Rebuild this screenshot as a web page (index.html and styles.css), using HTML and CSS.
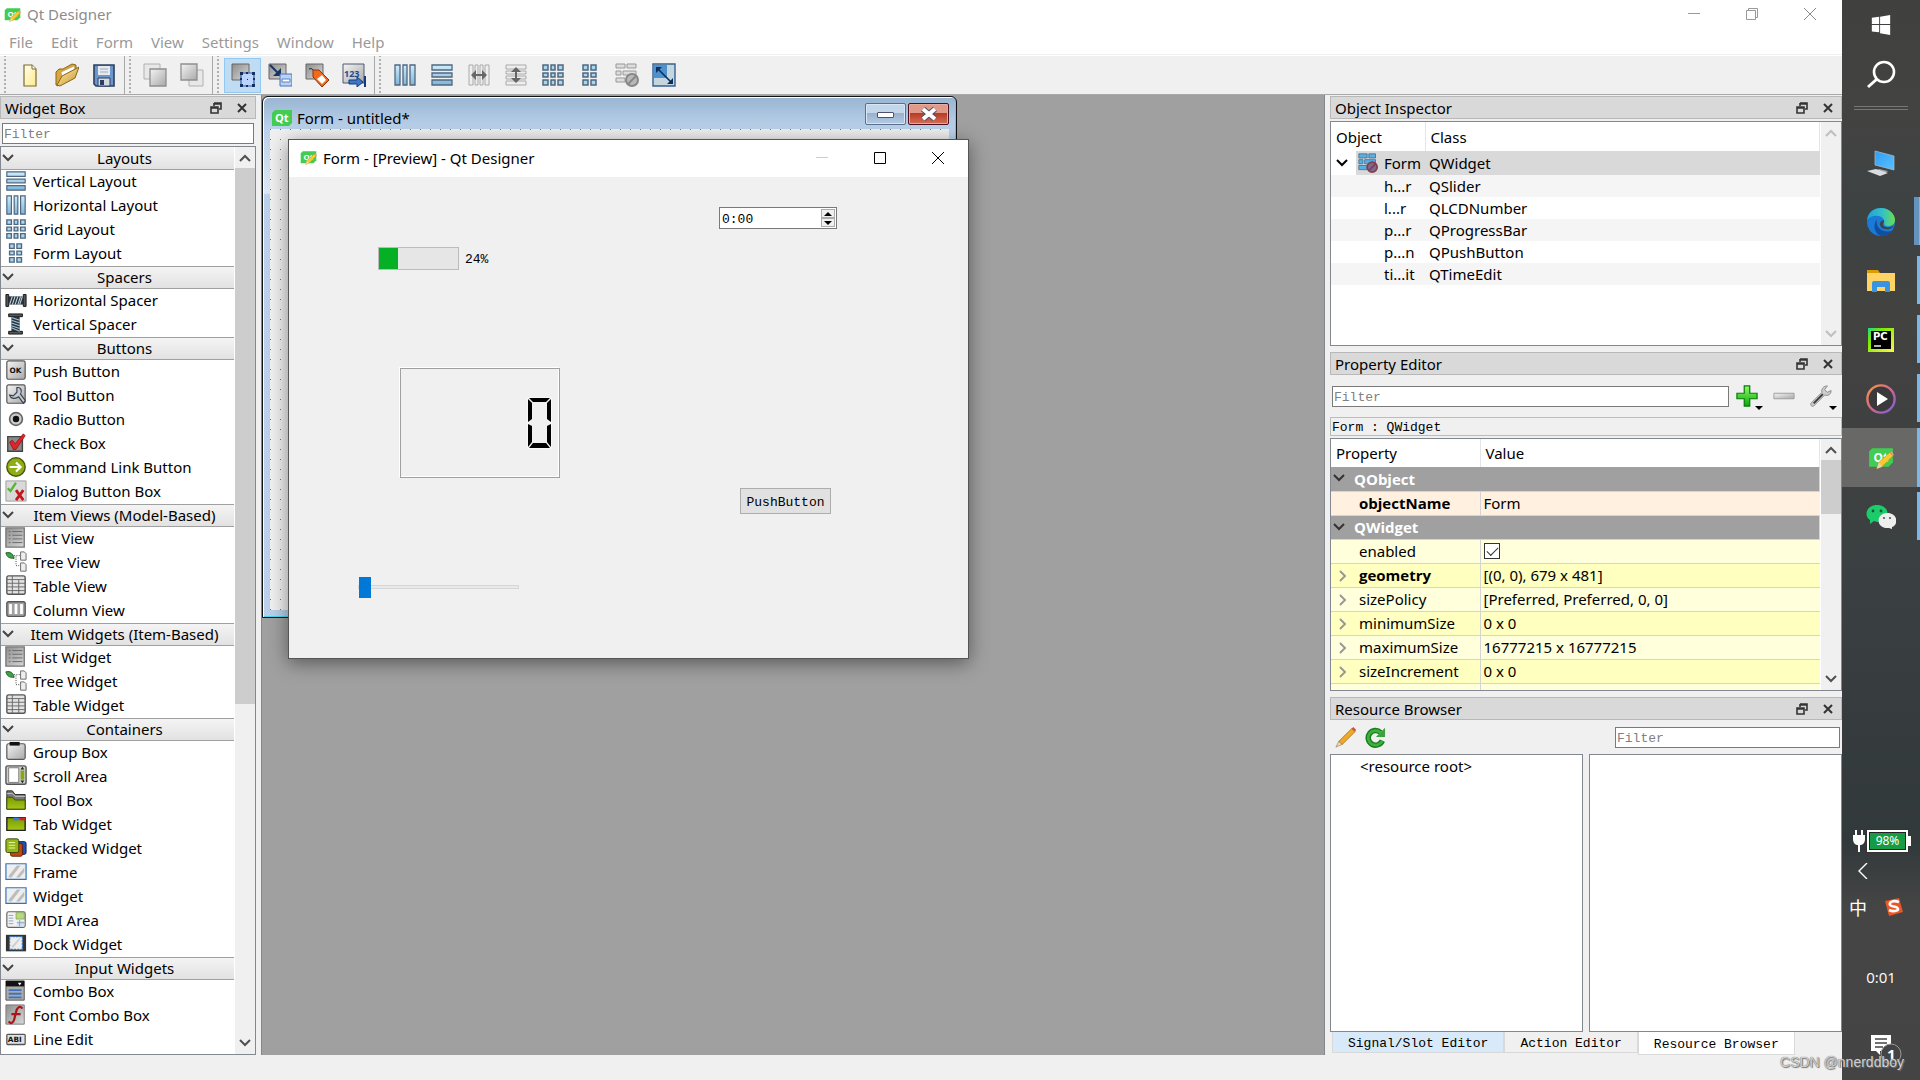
FILE: index.html
```html
<!DOCTYPE html>
<html lang="en">
<head>
    <meta charset="UTF-8">
    <meta name="viewport" content="width=device-width, initial-scale=1.0">
    <title>Qt Designer</title>
    <link rel="stylesheet" href="styles.css">
</head>
<body>

    <!-- Gradients shared by the icons -->
    <svg class="gradients" aria-hidden="true">
        <defs>
            <linearGradient id="blue" x1="0" y1="0" x2="0" y2="1"><stop offset="0" stop-color="#cdeefc"/><stop offset="1" stop-color="#7fb4d8"/></linearGradient>
            <linearGradient id="grey" x1="0" y1="0" x2="1" y2="1"><stop offset="0" stop-color="#f4f4f4"/><stop offset="1" stop-color="#a8a8a8"/></linearGradient>
            <linearGradient id="dark" x1="0" y1="0" x2="1" y2="1"><stop offset="0" stop-color="#8e8e8e"/><stop offset="1" stop-color="#d8d8d8"/></linearGradient>
            <linearGradient id="paper" x1="0" y1="0" x2="1" y2="1"><stop offset="0" stop-color="#fffff0"/><stop offset="1" stop-color="#ffe98a"/></linearGradient>
            <linearGradient id="gold" x1="0" y1="0" x2="1" y2="1"><stop offset="0" stop-color="#fff2b0"/><stop offset="1" stop-color="#c8912a"/></linearGradient>
            <linearGradient id="lime" x1="0" y1="0" x2="0" y2="1"><stop offset="0" stop-color="#7d9b00"/><stop offset="1" stop-color="#a3c61a"/></linearGradient>
            <linearGradient id="green" x1="0" y1="0" x2="0" y2="1"><stop offset="0" stop-color="#8dfa6a"/><stop offset="1" stop-color="#0aa80a"/></linearGradient>
            <linearGradient id="edge1" x1="0" y1="0" x2="1" y2="0"><stop offset="0" stop-color="#1fa2dc"/><stop offset=".6" stop-color="#36c3c0"/><stop offset="1" stop-color="#6be04a"/></linearGradient>
            <linearGradient id="ring" x1="0" y1="0" x2="1" y2="1"><stop offset="0" stop-color="#ff9440"/><stop offset=".5" stop-color="#d0688c"/><stop offset="1" stop-color="#7a5ce0"/></linearGradient>
            <linearGradient id="pyc" x1="0" y1="0" x2="1" y2="1"><stop offset="0" stop-color="#21d789"/><stop offset=".3" stop-color="#7be800"/><stop offset="1" stop-color="#fcf84a"/></linearGradient>
            <linearGradient id="screen" x1="0" y1="0" x2="1" y2="1"><stop offset="0" stop-color="#2f9df4"/><stop offset="1" stop-color="#5cc0ff"/></linearGradient>
        </defs>
    </svg>

    <!-- Icons -->
    <svg class="sprite" aria-hidden="true">
        <symbol id="qt-pencil" viewBox="0 0 24 20">
            <path d="M4 1h19v13l-4 4H1V4z" fill="#41cd52"/>
            <text x="5" y="14" class="qt-text">Qt</text>
            <path d="M10 14 20 5l3 3-10 10-5 2z" fill="#f9c92e" stroke="#b98a1a" stroke-width=".5"/>
            <path d="m20 5 2-1 2 3-1 1z" fill="#e59a86"/>
            <path d="m10 14-2 6 5-2z" fill="#e9d3ae"/>
        </symbol>
        <symbol id="qt" viewBox="0 0 20 16">
            <path d="M3 0h17v13l-3 3H0V3z" fill="#41cd52"/>
            <text x="3" y="12" class="qt-text">Qt</text>
        </symbol>
        <symbol id="float" viewBox="0 0 12 12">
            <path d="M4 1h7v6H9M4 1v3M4 2h7" fill="none" stroke="#333" stroke-width="1.6"/>
            <path d="M1 5h7v6H1zM1 6h7" fill="none" stroke="#333" stroke-width="1.6"/>
        </symbol>
        <symbol id="x" viewBox="0 0 12 12"><path d="m2 2 8 8M10 2l-8 8" stroke="#333" stroke-width="2" fill="none"/></symbol>
        <symbol id="thin-x" viewBox="0 0 12 12"><path d="m0 0 12 12M12 0 0 12" stroke="currentColor" fill="none"/></symbol>
        <symbol id="down" viewBox="0 0 12 12"><path d="m1 3 5 5 5-5" stroke="currentColor" stroke-width="2" fill="none"/></symbol>
        <symbol id="up" viewBox="0 0 12 12"><path d="m1 9 5-5 5 5" stroke="currentColor" stroke-width="2" fill="none"/></symbol>
        <symbol id="right" viewBox="0 0 12 12"><path d="m4 1 5 5-5 5" stroke="currentColor" stroke-width="2" fill="none"/></symbol>

        <!-- toolbar -->
        <symbol id="new" viewBox="0 0 24 24"><path d="M6 2h8l4 4v17H6z" fill="url(#paper)" stroke="#7d6a2c" stroke-width="1.2"/><path d="M14 2v4h4" fill="#fff" stroke="#7d6a2c"/></symbol>
        <symbol id="open" viewBox="0 0 24 24"><path d="M1 22V9l3-3h4l9-5 4 1v6L8 18 3 23z" fill="#d9a63a" stroke="#8a6418"/><path d="m6 9 13-6 1 3L7 15z" fill="#fff" stroke="#b79a50" stroke-width=".7"/><path d="M2 22 7 13 24 4l-4 11L5 23z" fill="url(#gold)" stroke="#8a6418"/></symbol>
        <symbol id="save" viewBox="0 0 24 24"><path d="M2 2h20v21H4l-2-2z" fill="#6c97cc" stroke="#2b3f60" stroke-width="1.6"/><path d="M6 3h12v9H6z" fill="#e6eaf0"/><path d="M8 6h8M8 9h8" stroke="#a2abb8"/><path d="M6 15h12v8H6z" fill="#d4d9e0" stroke="#2b3f60"/><path d="M8 17h4v5H8z" fill="#2b3f60"/></symbol>
        <symbol id="back" viewBox="0 0 24 24"><path d="M1 1h16v15H1z" fill="#e8e8e8" stroke="#b0b0b0"/><path d="M7 6h16v17H7z" fill="url(#grey)" stroke="#8f8f8f" stroke-width="1.3"/></symbol>
        <symbol id="front" viewBox="0 0 24 24"><path d="M9 7h14v16H9z" fill="#e8e8e8" stroke="#b0b0b0"/><path d="M1 1h16v16H1z" fill="url(#grey)" stroke="#8f8f8f" stroke-width="1.3"/></symbol>
        <symbol id="edit-widgets" viewBox="0 0 24 24"><path d="M1 1h17v16H1z" fill="url(#dark)" stroke="#666"/><path d="M10 10h13v13H10z" fill="#bcd4ff" stroke="#2d5db0" stroke-width="1.2"/><path d="M9 9h3v3H9zM15 9h2v2h-2zM21 9h3v3h-3zM9 15h2v2H9zM22 15h2v2h-2zM9 21h3v3H9zM15 22h2v2h-2zM21 21h3v3h-3zM16 16h1v1h-1z" fill="#14305c"/></symbol>
        <symbol id="edit-signals" viewBox="0 0 24 24"><path d="M1 1h17v15H1z" fill="url(#dark)" stroke="#666"/><path d="m2 2 9 9" stroke="#17365f" stroke-width="2"/><path d="M13 13V5l-8 8z" fill="#17365f"/><path d="M12 11h12v12H12z" fill="#b8d2fa" stroke="#4a73b5"/><path d="M14 16h8v3h-8z" fill="#fff" stroke="#5a80c0"/></symbol>
        <symbol id="edit-buddies" viewBox="0 0 24 24"><path d="M1 1h17v15H1z" fill="url(#dark)" stroke="#666"/><path d="M4 6q4-2 6 5" stroke="#222" fill="none"/><path d="M8 7h6l10 10-7 7L8 14z" fill="#f26a1e" stroke="#8c3205"/><path d="m12 16 5-4 4 5-4 4z" fill="#fff"/></symbol>
        <symbol id="edit-tabs" viewBox="0 0 24 24"><path d="M1 1h21v19H1z" fill="url(#grey)" stroke="#4d5a70"/><text x="2" y="14" class="num-text">123</text><path d="M7 17h8v-3l6 5-6 5v-3H7z" fill="#3d78c8" stroke="#173b7a"/><path d="M23 13v11" stroke="#173b7a" stroke-width="2"/></symbol>
        <symbol id="lay-h" viewBox="0 0 24 24"><path d="M2 2h5v20H2zM10 2h4v20h-4zM17 2h5v20h-5z" fill="url(#blue)" stroke="#50677f" stroke-width="1.3"/></symbol>
        <symbol id="lay-v" viewBox="0 0 24 24"><path d="M2 2h20v5H2zM2 10h20v4H2zM2 17h20v5H2z" fill="url(#blue)" stroke="#50677f" stroke-width="1.3"/></symbol>
        <symbol id="split-h" viewBox="0 0 24 24"><path d="M2 2h4v20H2zM8 2h3v20H8zM13 2h3v20h-3zM18 2h4v20h-4z" fill="#eee" stroke="#aaa"/><path d="M4 12 9 7v4h6V7l5 5-5 5v-4H9v4z" fill="#666"/></symbol>
        <symbol id="split-v" viewBox="0 0 24 24"><path d="M2 2h20v4H2zM2 8h20v3H2zM2 13h20v3H2zM2 18h20v4H2z" fill="#eee" stroke="#aaa"/><path d="m12 4 5 5h-4v6h4l-5 5-5-5h4V9H7z" fill="#666"/></symbol>
        <symbol id="lay-grid" viewBox="0 0 24 24"><path d="M2 2h5v5H2zM10 2h4v5h-4zM17 2h5v5h-5zM2 10h5v4H2zM10 10h4v4h-4zM17 10h5v4h-5zM2 17h5v5H2zM10 17h4v5h-4zM17 17h5v5h-5z" fill="#a9d7f0" stroke="#50677f" stroke-width="1.5"/></symbol>
        <symbol id="lay-form" viewBox="0 0 24 24"><path d="M5 2h5v5H5zM13 2h5v5h-5zM5 10h5v4H5zM13 10h5v4h-5zM5 17h5v5H5zM13 17h5v5h-5z" fill="#a9d7f0" stroke="#50677f" stroke-width="1.5"/></symbol>
        <symbol id="break" viewBox="0 0 24 24"><path d="M1 1h9v4H1zM12 1h9v4h-9zM1 8h5v4H1zM8 8h13v4H8zM1 15h9v4H1z" fill="#ddd" stroke="#999"/><circle cx="17" cy="17" r="6" fill="#b8b8b8" stroke="#888" stroke-width="2"/><path d="m13 21 8-8" stroke="#888" stroke-width="2"/></symbol>
        <symbol id="adjust" viewBox="0 0 24 24"><path d="M1 1h22v22H1z" fill="#c5d6df" stroke="#35618f" stroke-width="1.4"/><path d="M2 2h13v13H2z" fill="#4d92cf"/><path d="m5 5 14 14" stroke="#0a2f5c" stroke-width="1.6"/><path d="M4 4h6l-6 6zM21 21h-6l6-6z" fill="#0a2f5c"/></symbol>

        <!-- widget box -->
        <symbol id="sp-h" viewBox="0 0 24 24"><path d="M1 6h3v13H1zM20 6h3v13h-3z" fill="#555" stroke="#111"/><path d="M4 8h16v9H4z" fill="#2b333a"/><path d="m5 17 3-9m0 9 3-9m0 9 3-9m0 9 3-9m-1 9 3-9" stroke="#bcd4e2" stroke-width="1.2"/></symbol>
        <symbol id="sp-v" viewBox="0 0 24 24"><path d="M4 1h15v3H4zM4 20h15v3H4z" fill="#555" stroke="#111"/><path d="M7 4h9v16H7z" fill="#2b333a"/><path d="m7 5 9 3m-9 0 9 3m-9 0 9 3m-9 0 9 3m-9-1 9 4" stroke="#9fc6de" stroke-width="1.2"/></symbol>
        <symbol id="w-push" viewBox="0 0 24 24"><rect x="2" y="1" width="20" height="20" rx="2" fill="url(#grey)" stroke="#555" stroke-width="1.3"/><text x="5" y="14" class="ok-text">OK</text></symbol>
        <symbol id="w-tool" viewBox="0 0 24 24"><rect x="2" y="1" width="20" height="20" rx="2" fill="url(#grey)" stroke="#555" stroke-width="1.3"/><path d="M13 4c4-1 6 3 4 7l5 7-2 3-5-7c-4 3-9 2-10-2l4 1 4-4z" fill="#c4cad3" stroke="#3b424e" stroke-width="1.3"/></symbol>
        <symbol id="w-radio" viewBox="0 0 24 24"><circle cx="12" cy="12" r="7" fill="#ccc" stroke="#666" stroke-width="1.8"/><circle cx="12" cy="12" r="3.5" fill="#111"/></symbol>
        <symbol id="w-check" viewBox="0 0 24 24"><path d="M3 5h16v16H3z" fill="#888" stroke="#444" stroke-width="1.5"/><path d="m5 11 3-2 3 4 9-11 2 2-10 15H9z" fill="#e0242a" stroke="#8d1014" stroke-width=".8"/></symbol>
        <symbol id="w-cmd" viewBox="0 0 24 24"><circle cx="12" cy="12" r="10" fill="#8fae14" stroke="#4b5c0d" stroke-width="1.6"/><path d="M5 12h12m-5-5 5 5-5 5" fill="none" stroke="#fff" stroke-width="2.4"/></symbol>
        <symbol id="w-dialog" viewBox="0 0 24 24"><path d="M1 1h22v22H1z" fill="#d9d9d9" stroke="#999"/><path d="m3 9 3 3 6-9" fill="none" stroke="#55b82e" stroke-width="2.5"/><path d="m12 11 8 11M20 11l-8 11" stroke="#c4181c" stroke-width="3"/></symbol>
        <symbol id="w-list" viewBox="0 0 24 24"><path d="M1 1h20v21H1z" fill="url(#dark)" stroke="#777" stroke-width="1.5"/><path d="M4 5h2M8 5h11M4 9h2M8 9h11M4 13h2M8 13h11M4 17h2M8 17h11" stroke="#666"/></symbol>
        <symbol id="w-tree" viewBox="0 0 24 24"><path d="M1 2c5-1 8 1 9 6-5 0-8-1-9-6z" fill="#3da548" stroke="#1c5424"/><path d="M10 5h6M12 6v10h4" stroke="#333" stroke-dasharray="1 1.5" fill="none"/><path d="M17 1h4l2 2v7h-6zM17 13h4l2 2v7h-6z" fill="#eee" stroke="#666"/></symbol>
        <symbol id="w-table" viewBox="0 0 24 24"><rect x="2" y="1" width="20" height="20" rx="2" fill="#e3e3e3" stroke="#555" stroke-width="1.5"/><path d="M2 5h20M2 9h20M2 13h20M2 17h20M8 1v20M15 5v16" stroke="#666"/></symbol>
        <symbol id="w-column" viewBox="0 0 24 24"><rect x="2" y="3" width="20" height="16" rx="2" fill="#aaa" stroke="#555" stroke-width="1.5"/><path d="M4 5h4v12H4zM10 5h4v12h-4zM16 5h4v12h-4z" fill="#fff" stroke="#777" stroke-width=".6"/></symbol>
        <symbol id="w-group" viewBox="0 0 24 24"><rect x="2" y="3" width="20" height="17" rx="2" fill="url(#grey)" stroke="#555" stroke-width="1.3"/><path d="M5 1h11v4H5z" fill="#111"/></symbol>
        <symbol id="w-scroll" viewBox="0 0 24 24"><rect x="1" y="1" width="22" height="20" rx="2" fill="#ccc" stroke="#555" stroke-width="1.5"/><path d="M4 3h11v16H4z" fill="#fff" stroke="#777"/><path d="M17 6h4v10h-4z" fill="#85a80b"/><path d="m17 5 2-3 2 3zM17 17l2 3 2-3z" fill="#222"/></symbol>
        <symbol id="w-toolbox" viewBox="0 0 24 24"><path d="M2 2h6l3 4h11v16H2z" fill="#777" stroke="#222"/><path d="M2 5h6l3 3h11" stroke="#ccc" fill="none"/><path d="M2 9h6l3 3h11v10H2z" fill="url(#lime)" stroke="#3c4a05"/></symbol>
        <symbol id="w-tab" viewBox="0 0 24 24"><path d="M2 5h20v14H2z" fill="url(#lime)" stroke="#222" stroke-width="1.5"/><path d="M9 5h6v3H9z" fill="#2f7de0"/><path d="M16 5h6v3h-6z" fill="#d0252a"/></symbol>
        <symbol id="w-stack" viewBox="0 0 24 24"><rect x="10" y="5" width="13" height="14" rx="2" fill="#1d4fb4" stroke="#0c2558"/><rect x="6" y="7" width="13" height="14" rx="2" fill="#c04a12" stroke="#5d2003"/><rect x="1" y="2" width="14" height="15" rx="2" fill="#95b61a" stroke="#33400a"/><path d="M4 6h7M4 9h7M4 12h7" stroke="#e9ff9a"/></symbol>
        <symbol id="w-frame" viewBox="0 0 24 24"><path d="M1 3h22v17H1z" fill="#eee" stroke="#2f74c4" stroke-width="1.3"/><path d="m4 16 9-11h4L7 18H4zM12 18 21 7v5l-5 6z" fill="#bdbdbd"/></symbol>
        <symbol id="w-mdi" viewBox="0 0 24 24"><rect x="2" y="3" width="20" height="17" rx="2" fill="#f2f2f2" stroke="#666" stroke-width="1.3"/><path d="M12 4h9v7h-9z" fill="#b5da7f" stroke="#6d8f3c" stroke-width=".6"/><path d="M13 13h8v6h-8z" fill="#cfe2f8"/><path d="M4 7h5M4 10h5M4 13h5M4 16h5M13 15h8M16 12v7" stroke="#8aa0b8"/></symbol>
        <symbol id="w-dock" viewBox="0 0 24 24"><path d="M1 2h22v18H1z" fill="#333"/><path d="M5 4h14v14H5z" fill="#eee" stroke="#2f74c4" stroke-width="1.5" stroke-dasharray="2 1.5"/><path d="m7 15 8-9h2L9 16z" fill="#ccc"/></symbol>
        <symbol id="w-combo" viewBox="0 0 24 24"><path d="M1 1h20v21H1z" fill="#aaa" stroke="#555"/><path d="M1 1h20v6H1z" fill="#111"/><path d="m14 3 2 3 2-3z" fill="#fff"/><path d="M4 11h14M4 15h14M4 19h14" stroke="#3d74bd" stroke-width="2"/></symbol>
        <symbol id="w-font" viewBox="0 0 24 24"><path d="M1 1h20v21H1z" fill="url(#dark)" stroke="#777"/><path d="M19 5c-3-4-6-1-7 4l-2 8c-1 4-4 5-6 2M7 11h10" stroke="#a8161a" stroke-width="2.4" fill="none"/></symbol>
        <symbol id="w-line" viewBox="0 0 24 24"><rect x="2" y="7" width="20" height="11" rx="1" fill="#e2e2e2" stroke="#555" stroke-width="1.4"/><text x="3" y="15" class="ok-text">ABI</text></symbol>

        <!-- docks -->
        <symbol id="no-layout" viewBox="0 0 24 24"><path d="M1 1h10v5H1zM13 1h8v5h-8zM1 8h5v5H1zM8 8h13v5H8zM1 15h10v5H1z" fill="#55b0e4" stroke="#4a6f8c"/><circle cx="17" cy="17" r="6" fill="#7d6b8c" stroke="#833c50" stroke-width="2"/><path d="m13 21 8-8" stroke="#833c50" stroke-width="2"/></symbol>
        <symbol id="plus" viewBox="0 0 24 24"><path d="M9 1h6v8h8v6h-8v8H9v-8H1V9h8z" fill="url(#green)" stroke="#087a08" stroke-width="1.3"/></symbol>
        <symbol id="minus" viewBox="0 0 24 24"><path d="M1 9h22v6H1z" fill="url(#grey)" stroke="#999"/></symbol>
        <symbol id="wrench" viewBox="0 0 24 24"><path d="M1 20 13 8c-1-4 2-7 6-7l-3 4 3 3 4-2c0 5-4 6-7 5L4 23c-2 1-4-1-3-3z" fill="#ccc" stroke="#888"/><path d="M4 20 14 10" stroke="#333" stroke-width="1.8"/></symbol>
        <symbol id="pencil" viewBox="0 0 24 24"><path d="M4 17 18 3l4 3L8 20z" fill="#f0a828" stroke="#a06510" stroke-width=".8"/><path d="m18 3 2-2 3 3-1 2z" fill="#c9573a"/><path d="m4 17-3 6 7-3z" fill="#eedab5" stroke="#8a6a3a" stroke-width=".6"/></symbol>
        <symbol id="reload" viewBox="0 0 24 24"><path d="M20 16a8 8 0 1 1-2-9" fill="none" stroke="#16801c" stroke-width="6"/><path d="M20 16a8 8 0 1 1-2-9" fill="none" stroke="#3fae3f" stroke-width="3"/><path d="M23 2v10H13z" fill="#3fa03f"/></symbol>

        <!-- taskbar -->
        <symbol id="t-win" viewBox="0 0 24 24"><path d="m2 4 8-1v8H2zM11 3l11-2v10H11zM2 12h8v8l-8-1zM11 12h11v11l-11-2z" fill="#fff"/></symbol>
        <symbol id="t-search" viewBox="0 0 30 30"><circle cx="18" cy="12" r="10" fill="none" stroke="#fff" stroke-width="2.6"/><path d="m11 19-9 8" stroke="#fff" stroke-width="3"/></symbol>
        <symbol id="t-pc" viewBox="0 0 30 30"><path d="m9 3 19 5v14L9 17z" fill="url(#screen)" stroke="#9fb8c8" stroke-width=".8"/><path d="m13 21 9 2-4 3-8-3z" fill="#9aa4aa"/><path d="m1 23 9-2 12 4-8 3z" fill="#d9dde0"/></symbol>
        <symbol id="t-edge" viewBox="0 0 30 30"><circle cx="15" cy="15" r="14" fill="#1b7ad6"/><path d="M1 13C2 5 8 1 15 1c8 0 14 6 14 12 0 5-5 7-9 6-3-1-1-3-2-6-2-5-12-6-17 0z" fill="url(#edge1)"/><path d="M11 12c-2 8 4 14 15 12-3 4-7 5-11 5-6-2-9-10-4-17z" fill="#0f4ea0"/><path d="M18 13c0 3-3 5 1 7 3 1 6 0 9-1-2 3-9 5-13 1-2-3-1-6 3-7z" fill="#3d4243"/></symbol>
        <symbol id="t-folder" viewBox="0 0 30 30"><path d="M1 4h11l2 3H1z" fill="#dc9b00"/><path d="M1 7h28v18H1z" fill="#ffd464"/><path d="M6 26V17q0-2 2-2h14q2 0 2 2v9h-5v-5h-8v5z" fill="#3893e0"/></symbol>
        <symbol id="t-pycharm" viewBox="0 0 30 30"><path d="M2 3h26v24H2z" fill="url(#pyc)"/><path d="M5 6h20v18H5z" fill="#000"/><text x="7" y="15" class="pc-text">PC</text><path d="M8 21h7" stroke="#fff" stroke-width="1.4"/></symbol>
        <symbol id="t-media" viewBox="0 0 30 30"><circle cx="15" cy="15" r="13.6" fill="#3a3a3c" stroke="url(#ring)" stroke-width="2.4"/><path d="m11 8 11 7-11 7z" fill="#fff"/></symbol>
        <symbol id="t-wechat" viewBox="0 0 30 30"><path d="M11 3c14 0 14 17 0 17l-3-1-4 3v-4C-3 13 1 3 11 3z" fill="#1ccc6a"/><circle cx="7" cy="9" r="1.4" fill="#145c33"/><circle cx="15" cy="9" r="1.4" fill="#145c33"/><path d="M21 11c12 0 11 13 5 14v2l-3-1c-14 1-13-15-2-15z" fill="#eee"/><circle cx="18" cy="16" r="1.1" fill="#555"/><circle cx="24" cy="16" r="1.1" fill="#555"/></symbol>
        <symbol id="t-plug" viewBox="0 0 12 22"><path d="M2 0h2v5h4V0h2v5h2v4q0 5-4 6H7v7H5v-7H4Q0 14 0 9V5h2z" fill="#fff"/></symbol>
        <symbol id="t-left" viewBox="0 0 10 16"><path d="M9 0 1 8l8 8" fill="none" stroke="#fff" stroke-width="1.4"/></symbol>
        <symbol id="t-sogou" viewBox="0 0 20 20"><path d="m1 4 14-3 4 14-14 4z" fill="#ee5524"/><path d="M15 5C9 3 5 5 6 8c1 2 8 1 8 4 0 2-5 3-9 1" fill="none" stroke="#fff" stroke-width="2.6"/></symbol>
        <symbol id="t-note" viewBox="0 0 32 30"><path d="M1 1h20v16H10v4l-4-4H1z" fill="#fff"/><path d="M5 5h12M5 9h12M5 13h8" stroke="#444" stroke-width="1.3"/><circle cx="21" cy="20" r="10" fill="#444" stroke="#999"/><text x="17" y="26" class="badge-text">1</text></symbol>
    </svg>

    <div class="screen">
        <div class="app">
            <header class="titlebar">
                <svg class="logo"><use href="#qt-pencil"/></svg>
                <span>Qt Designer</span>
                <div class="win-buttons">
                    <button aria-label="Minimize"><svg><path d="M0 5.500h12" stroke="#999"/></svg></button>
                    <button aria-label="Restore"><svg><path d="M.5 2.500h9v9h-9zM2.500 2.500v-2h9v9h-2" fill="none" stroke="#999"/></svg></button>
                    <button aria-label="Close"><svg><use href="#thin-x"/></svg></button>
                </div>
            </header>

            <nav class="menubar">
                <button>File</button>
                <button>Edit</button>
                <button>Form</button>
                <button>View</button>
                <button>Settings</button>
                <button>Window</button>
                <button>Help</button>
            </nav>

            <div class="toolbar">
                <div class="tool-group">
                    <button aria-label="New"><svg><use href="#new"/></svg></button>
                    <button aria-label="Open"><svg><use href="#open"/></svg></button>
                    <button aria-label="Save"><svg><use href="#save"/></svg></button>
                </div>
                <div class="tool-group">
                    <button aria-label="Send to Back"><svg><use href="#back"/></svg></button>
                    <button aria-label="Bring to Front"><svg><use href="#front"/></svg></button>
                </div>
                <div class="tool-group">
                    <button class="active" aria-label="Edit Widgets"><svg><use href="#edit-widgets"/></svg></button>
                    <button aria-label="Edit Signals/Slots"><svg><use href="#edit-signals"/></svg></button>
                    <button aria-label="Edit Buddies"><svg><use href="#edit-buddies"/></svg></button>
                    <button aria-label="Edit Tab Order"><svg><use href="#edit-tabs"/></svg></button>
                </div>
                <div class="tool-group last">
                    <button aria-label="Lay Out Horizontally"><svg><use href="#lay-h"/></svg></button>
                    <button aria-label="Lay Out Vertically"><svg><use href="#lay-v"/></svg></button>
                    <button aria-label="Horizontal Splitter"><svg><use href="#split-h"/></svg></button>
                    <button aria-label="Vertical Splitter"><svg><use href="#split-v"/></svg></button>
                    <button aria-label="Lay Out in a Grid"><svg><use href="#lay-grid"/></svg></button>
                    <button aria-label="Lay Out in a Form"><svg><use href="#lay-form"/></svg></button>
                    <button aria-label="Break Layout"><svg><use href="#break"/></svg></button>
                    <button aria-label="Adjust Size"><svg><use href="#adjust"/></svg></button>
                </div>
            </div>

            <main class="workspace">
                <aside class="dock widget-box">
                    <div class="dock-title">
                        <h2>Widget Box</h2>
                        <button aria-label="Float"><svg><use href="#float"/></svg></button>
                        <button aria-label="Close"><svg><use href="#x"/></svg></button>
                    </div>
                    <input class="filter" type="text" placeholder="Filter" aria-label="Filter widgets">
                    <div class="scroll-view">
                        <div class="widget-list">
                            <h3><svg><use href="#down"/></svg>Layouts</h3>
                            <ul>
                                <li><svg><use href="#lay-v"/></svg>Vertical Layout</li>
                                <li><svg><use href="#lay-h"/></svg>Horizontal Layout</li>
                                <li><svg><use href="#lay-grid"/></svg>Grid Layout</li>
                                <li><svg><use href="#lay-form"/></svg>Form Layout</li>
                            </ul>
                            <h3><svg><use href="#down"/></svg>Spacers</h3>
                            <ul>
                                <li><svg><use href="#sp-h"/></svg>Horizontal Spacer</li>
                                <li><svg><use href="#sp-v"/></svg>Vertical Spacer</li>
                            </ul>
                            <h3><svg><use href="#down"/></svg>Buttons</h3>
                            <ul>
                                <li><svg><use href="#w-push"/></svg>Push Button</li>
                                <li><svg><use href="#w-tool"/></svg>Tool Button</li>
                                <li><svg><use href="#w-radio"/></svg>Radio Button</li>
                                <li><svg><use href="#w-check"/></svg>Check Box</li>
                                <li><svg><use href="#w-cmd"/></svg>Command Link Button</li>
                                <li><svg><use href="#w-dialog"/></svg>Dialog Button Box</li>
                            </ul>
                            <h3><svg><use href="#down"/></svg>Item Views (Model-Based)</h3>
                            <ul>
                                <li><svg><use href="#w-list"/></svg>List View</li>
                                <li><svg><use href="#w-tree"/></svg>Tree View</li>
                                <li><svg><use href="#w-table"/></svg>Table View</li>
                                <li><svg><use href="#w-column"/></svg>Column View</li>
                            </ul>
                            <h3><svg><use href="#down"/></svg>Item Widgets (Item-Based)</h3>
                            <ul>
                                <li><svg><use href="#w-list"/></svg>List Widget</li>
                                <li><svg><use href="#w-tree"/></svg>Tree Widget</li>
                                <li><svg><use href="#w-table"/></svg>Table Widget</li>
                            </ul>
                            <h3><svg><use href="#down"/></svg>Containers</h3>
                            <ul>
                                <li><svg><use href="#w-group"/></svg>Group Box</li>
                                <li><svg><use href="#w-scroll"/></svg>Scroll Area</li>
                                <li><svg><use href="#w-toolbox"/></svg>Tool Box</li>
                                <li><svg><use href="#w-tab"/></svg>Tab Widget</li>
                                <li><svg><use href="#w-stack"/></svg>Stacked Widget</li>
                                <li><svg><use href="#w-frame"/></svg>Frame</li>
                                <li><svg><use href="#w-frame"/></svg>Widget</li>
                                <li><svg><use href="#w-mdi"/></svg>MDI Area</li>
                                <li><svg><use href="#w-dock"/></svg>Dock Widget</li>
                            </ul>
                            <h3><svg><use href="#down"/></svg>Input Widgets</h3>
                            <ul>
                                <li><svg><use href="#w-combo"/></svg>Combo Box</li>
                                <li><svg><use href="#w-font"/></svg>Font Combo Box</li>
                                <li><svg><use href="#w-line"/></svg>Line Edit</li>
                            </ul>
                        </div>
                        <div class="scrollbar">
                            <svg><use href="#up"/></svg>
                            <div class="track"><div class="thumb" style="height: 62%"></div></div>
                            <svg><use href="#down"/></svg>
                        </div>
                    </div>
                </aside>

                <section class="mdi">
                    <div class="sub-window">
                        <div class="sub-title">
                            <svg class="logo"><use href="#qt"/></svg>
                            <span>Form - untitled*</span>
                            <button class="sub-min" aria-label="Minimize form"><i></i></button>
                            <button class="sub-close" aria-label="Close form"><svg viewBox="0 0 18 14"><path d="m3 2 12 10M15 2 3 12" stroke="#50506a" stroke-width="6"/><path d="m3 2 12 10M15 2 3 12" stroke="#fff" stroke-width="4"/></svg></button>
                        </div>
                        <div class="form-grid"></div>
                    </div>

                    <div class="preview">
                        <div class="preview-title">
                            <svg class="logo"><use href="#qt-pencil"/></svg>
                            <span>Form - [Preview] - Qt Designer</span>
                            <div class="win-buttons">
                                <button aria-label="Minimize preview"><svg><path d="M0 5.500h12" stroke="#ccc"/></svg></button>
                                <button aria-label="Maximize preview"><svg><path d="M.5.5h11v11H.5z" fill="none" stroke="#000"/></svg></button>
                                <button aria-label="Close preview"><svg><use href="#thin-x"/></svg></button>
                            </div>
                        </div>
                        <div class="canvas">
                            <div class="progress-box">
                                <progress id="progress" value="24" max="100"></progress>
                                <label for="progress">24%</label>
                            </div>
                            <div class="time-edit">
                                <input type="text" value="0:00" aria-label="Time">
                                <div class="spin">
                                    <button aria-label="Step up"><svg viewBox="0 0 8 4"><path d="m0 4 4-4 4 4z"/></svg></button>
                                    <button aria-label="Step down"><svg viewBox="0 0 8 4"><path d="m0 0 4 4 4-4z"/></svg></button>
                                </div>
                            </div>
                            <div class="lcd">
                                <svg viewBox="0 0 25 52" role="img" aria-label="0">
                                    <path d="M1 1h23v50H1z" fill="none" stroke="#fff" stroke-width="1"/>
                                    <path d="M2 1h21l-4 4H6zM1 2l4 4v16l-4 3zM24 2l-4 4v16l4 3zM1 27l4 2v16l-4 5zM24 27l-4 2v16l4 5zM2 51h21l-4-5H6z"/>
                                </svg>
                            </div>
                            <button class="push-button">PushButton</button>
                            <input class="slider" type="range" min="0" max="99" value="0" aria-label="Slider">
                        </div>
                    </div>
                </section>

                <aside class="right-docks">
                    <section class="dock">
                        <div class="dock-title">
                            <h2>Object Inspector</h2>
                            <button aria-label="Float"><svg><use href="#float"/></svg></button>
                            <button aria-label="Close"><svg><use href="#x"/></svg></button>
                        </div>
                        <div class="scroll-view">
                            <div class="table-wrap">
                                <table class="objects">
                                    <thead>
                                        <tr><th>Object</th><th>Class</th></tr>
                                    </thead>
                                    <tbody>
                                        <tr class="root">
                                            <td><div class="root-cell"><span><svg class="chev"><use href="#down"/></svg></span><div><svg class="form-icon"><use href="#no-layout"/></svg>Form</div></div></td>
                                            <td>QWidget</td>
                                        </tr>
                                        <tr><td>h...r</td><td>QSlider</td></tr>
                                        <tr><td>l...r</td><td>QLCDNumber</td></tr>
                                        <tr><td>p...r</td><td>QProgressBar</td></tr>
                                        <tr><td>p...n</td><td>QPushButton</td></tr>
                                        <tr><td>ti...it</td><td>QTimeEdit</td></tr>
                                    </tbody>
                                </table>
                            </div>
                            <div class="scrollbar disabled">
                                <svg><use href="#up"/></svg>
                                <div class="track"></div>
                                <svg><use href="#down"/></svg>
                            </div>
                        </div>
                    </section>

                    <section class="dock">
                        <div class="dock-title">
                            <h2>Property Editor</h2>
                            <button aria-label="Float"><svg><use href="#float"/></svg></button>
                            <button aria-label="Close"><svg><use href="#x"/></svg></button>
                        </div>
                        <div class="property-tools">
                            <input class="filter" type="text" placeholder="Filter" aria-label="Filter properties">
                            <button class="drop" aria-label="Add property"><svg><use href="#plus"/></svg></button>
                            <button aria-label="Remove property"><svg><use href="#minus"/></svg></button>
                            <button class="drop" aria-label="Configure"><svg><use href="#wrench"/></svg></button>
                        </div>
                        <div class="object-label">Form : QWidget</div>
                        <div class="scroll-view">
                            <div class="table-wrap">
                                <table class="properties">
                                    <thead>
                                        <tr><th>Property</th><th>Value</th></tr>
                                    </thead>
                                    <tbody>
                                        <tr class="group"><td colspan="2"><svg><use href="#down"/></svg>QObject</td></tr>
                                        <tr class="peach changed"><td>objectName</td><td>Form</td></tr>
                                        <tr class="group"><td colspan="2"><svg><use href="#down"/></svg>QWidget</td></tr>
                                        <tr><td><label for="enabled">enabled</label></td><td><input type="checkbox" id="enabled" checked></td></tr>
                                        <tr class="deep changed"><td><svg><use href="#right"/></svg>geometry</td><td>[(0, 0), 679 x 481]</td></tr>
                                        <tr><td><svg><use href="#right"/></svg>sizePolicy</td><td>[Preferred, Preferred, 0, 0]</td></tr>
                                        <tr class="deep"><td><svg><use href="#right"/></svg>minimumSize</td><td>0 x 0</td></tr>
                                        <tr><td><svg><use href="#right"/></svg>maximumSize</td><td>16777215 x 16777215</td></tr>
                                        <tr class="deep"><td><svg><use href="#right"/></svg>sizeIncrement</td><td>0 x 0</td></tr>
                                        <tr><td>baseSize</td><td></td></tr>
                                    </tbody>
                                </table>
                            </div>
                            <div class="scrollbar">
                                <svg><use href="#up"/></svg>
                                <div class="track"><div class="thumb" style="height: 26%"></div></div>
                                <svg><use href="#down"/></svg>
                            </div>
                        </div>
                    </section>

                    <section class="dock">
                        <div class="dock-title">
                            <h2>Resource Browser</h2>
                            <button aria-label="Float"><svg><use href="#float"/></svg></button>
                            <button aria-label="Close"><svg><use href="#x"/></svg></button>
                        </div>
                        <div class="resource-tools">
                            <button aria-label="Edit resources"><svg><use href="#pencil"/></svg></button>
                            <button aria-label="Reload"><svg><use href="#reload"/></svg></button>
                            <input class="filter" type="text" placeholder="Filter" aria-label="Filter resources">
                        </div>
                        <div class="resource-panes">
                            <div class="pane">&lt;resource root&gt;</div>
                            <div class="pane"></div>
                        </div>
                        <div class="tabs">
                            <button class="hover">Signal/Slot Editor</button>
                            <button>Action Editor</button>
                            <button class="selected">Resource Browser</button>
                        </div>
                    </section>
                </aside>
            </main>
        </div>

        <nav class="taskbar">
            <button class="start" aria-label="Start"><svg><use href="#t-win"/></svg></button>
            <button class="search" aria-label="Search"><svg><use href="#t-search"/></svg></button>
            <hr>
            <div class="tasks">
                <button aria-label="This PC"><svg><use href="#t-pc"/></svg></button>
                <button class="open multi" aria-label="Edge"><svg><use href="#t-edge"/></svg></button>
                <button class="open" aria-label="File Explorer"><svg><use href="#t-folder"/></svg></button>
                <button class="open" aria-label="PyCharm"><svg><use href="#t-pycharm"/></svg></button>
                <button class="open" aria-label="Media Player"><svg><use href="#t-media"/></svg></button>
                <button class="open current" aria-label="Qt Designer"><svg class="small"><use href="#qt-pencil"/></svg></button>
                <button class="open" aria-label="WeChat"><svg><use href="#t-wechat"/></svg></button>
            </div>
            <div class="tray">
                <div class="battery"><svg><use href="#t-plug"/></svg><span>98%</span></div>
                <button class="more" aria-label="Show hidden icons"><svg><use href="#t-left"/></svg></button>
                <div class="ime"><span>中</span><svg><use href="#t-sogou"/></svg></div>
                <time>0:01</time>
                <button class="note" aria-label="Notifications"><svg><use href="#t-note"/></svg></button>
            </div>
        </nav>
        <div class="watermark">CSDN @nnerddboy</div>
    </div>

</body>
</html>
```

FILE: styles.css
```css
* {
    box-sizing: border-box;
}

body {
    margin: 0;
    font-family: "Noto Sans", "Open Sans", sans-serif;
    font-size: 15px;
    line-height: 20px;
    color: #000;
    background-color: #f0f0f0;
}

button {
    font: inherit;
    color: inherit;
    margin: 0;
    padding: 0;
    border: none;
    background: none;
    display: flex;
    align-items: center;
    justify-content: center;
}

svg {
    display: block;
    flex: none;
    width: 12px;
    height: 12px;
    overflow: visible;
}

h2, h3, ul {
    margin: 0;
    padding: 0;
    font-size: 15px;
    font-weight: normal;
    list-style: none;
}

.gradients {
    position: absolute;
    width: 0;
    height: 0;
}

.sprite {
    display: none;
}

.qt-text {
    font: bold 11px "Open Sans", sans-serif;
    fill: #fff;
}

.num-text {
    font: bold 9px "Open Sans", sans-serif;
    fill: #1c4a94;
}

.ok-text {
    font: bold 8px "DejaVu Sans", sans-serif;
    fill: #111;
}

.pc-text {
    font: bold 10px "DejaVu Sans", sans-serif;
    fill: #fff;
}

.badge-text {
    font: bold 15px "Open Sans", sans-serif;
    fill: #fff;
}

.screen {
    position: relative;
    display: flex;
    height: 100vh;
    overflow: hidden;
}

.app {
    flex: 1;
    min-width: 0;
    display: flex;
    flex-direction: column;
}

/* Title, menu and tool bars */
.titlebar {
    display: flex;
    align-items: center;
    height: 28px;
    padding: 0 3px 0 4px;
    gap: 6px;
    color: #8c8c8c;
    background-color: #fff;
}

.logo {
    width: 17px;
    height: 15px;
}

.win-buttons {
    display: flex;
    margin-left: auto;
}

.win-buttons button {
    width: 58px;
    height: 28px;
}

.menubar {
    display: flex;
    height: 27px;
    padding-top: 2px;
    background-color: #fff;
    border-bottom: 1px solid #f0f0f0;
    color: #999;
}

.menubar button {
    padding: 0 9px;
}

.toolbar {
    display: flex;
    height: 40px;
    border-top: 1px solid #fff;
    border-bottom: 1px solid #a8a8a8;
}

.tool-group {
    display: flex;
    align-items: center;
    padding: 0 2px 0 11px;
    border-right: 1px solid #a8a8a8;
    background: radial-gradient(circle, #b0b0b0 1px, transparent 1px) 3px 2px / 4px 4px repeat-y;
}

.tool-group.last {
    border-right: none;
}

.tool-group button {
    width: 37px;
    height: 35px;
}

.tool-group svg {
    width: 24px;
    height: 24px;
}

.tool-group .active {
    background-color: #c0dcf3;
    border: 1px solid #90c8f6;
}

.workspace {
    flex: 1;
    min-height: 0;
    display: flex;
    gap: 5px;
    padding-bottom: 25px;
}

/* Docks */
.dock {
    display: flex;
    flex-direction: column;
    min-height: 0;
}

.dock-title {
    display: flex;
    align-items: center;
    height: 23px;
    flex: none;
    padding: 0 4px;
    border: 1px solid #b8b8b8;
    background-color: #d9d9d9;
}

.dock-title h2 {
    flex: 1;
}

.dock-title button {
    width: 18px;
    height: 18px;
    margin-left: 8px;
}

.filter {
    display: block;
    height: 21px;
    margin: 0;
    padding: 2px 1px 0;
    border: 1px solid #7a7a7a;
    background-color: #fff;
    font: 13px "Liberation Mono", monospace;
}

.filter::placeholder {
    color: #808080;
}

.widget-box {
    width: 256px;
    padding-top: 1px;
}

.widget-box .filter {
    margin: 4px 2px 2px;
}

.scroll-view {
    flex: 1;
    min-height: 0;
    display: flex;
    border: 1px solid #828790;
    background-color: #fff;
}

.widget-list {
    flex: 1;
    overflow: hidden;
    padding-right: 1px;
}

.widget-list h3 {
    position: relative;
    height: 23px;
    padding-left: 14px;
    text-align: center;
    border-top: 1px solid #a0a0a0;
    border-bottom: 1px solid #a0a0a0;
    background: linear-gradient(#f4f4f4, #e2e2e2);
}

.widget-list h3:first-child {
    border-top-color: #f4f4f4;
}

.widget-list h3 svg {
    position: absolute;
    left: 1px;
    top: 4px;
    color: #444;
}

.widget-list li {
    display: flex;
    align-items: center;
    gap: 6px;
    height: 24px;
    padding: 0 0 2px 4px;
}

.widget-list li svg {
    width: 22px;
    height: 22px;
}

.scrollbar {
    width: 20px;
    display: flex;
    flex-direction: column;
    align-items: center;
    padding: 5px 0;
    gap: 4px;
    background-color: #f0f0f0;
    color: #505050;
}

.scrollbar.disabled {
    color: #bfbfbf;
}

.track {
    flex: 1;
    align-self: stretch;
}

.thumb {
    background-color: #cdcdcd;
}

/* MDI area */
.mdi {
    position: relative;
    flex: 1;
    overflow: hidden;
    background-color: #a0a0a0;
    border-left: 1px solid #828790;
    border-right: 1px solid #828790;
}

.sub-window {
    position: absolute;
    left: 0;
    top: 1px;
    width: 695px;
    height: 522px;
    padding: 2px 7px 7px;
    border: 1px solid #111;
    border-radius: 6px 6px 0 0;
    background: linear-gradient(#99b4d1, #b9d1ea 30px, #dce8f5 96px, #b9d1ea 98px);
    box-shadow: inset 1px 1px #fff, inset -1px -1px #4cd8f0;
}

.sub-title {
    display: flex;
    align-items: center;
    height: 30px;
    padding: 7px 0 0 2px;
}

.sub-title .logo {
    width: 20px;
    height: 16px;
    margin-right: 5px;
}

.sub-title span {
    flex: 1;
}

.sub-title button {
    width: 41px;
    height: 22px;
    margin: 0 0 8px 2px;
    border-radius: 2px;
}

.sub-min {
    border: 1px solid #5b6f91;
    background: linear-gradient(#c4d6ea 45%, #98b0ce 45%, #b5cbe4);
    box-shadow: inset 0 0 0 1px #d9e6f4;
}

.sub-min i {
    width: 17px;
    height: 6px;
    margin-top: 3px;
    border: 1px solid #50506a;
    border-radius: 1px;
    background-color: #fff;
}

.sub-close {
    border: 1px solid #4d1020;
    background: linear-gradient(#e09a8a 45%, #b8391f 45%, #d4705a);
    box-shadow: inset 0 0 0 1px #e8ab9c;
}

.sub-close svg {
    width: 18px;
    height: 14px;
}

.form-grid {
    height: 481px;
    background: radial-gradient(circle at 0 0, #777 1px, transparent 1px) 0 0 / 10px 10px #f0f0f0;
}

.preview {
    position: absolute;
    left: 26px;
    top: 44px;
    width: 681px;
    border: 1px solid #555;
    background-color: #f0f0f0;
    box-shadow: 0 4px 18px rgba(0, 0, 0, 0.45);
}

.preview-title {
    display: flex;
    align-items: center;
    height: 37px;
    padding: 0 1px 2px 11px;
    gap: 6px;
    background-color: #fff;
}

.canvas {
    position: relative;
    height: 481px;
    font: 13px "Liberation Mono", monospace;
}

.progress-box {
    position: absolute;
    left: 89px;
    top: 70px;
    display: flex;
    align-items: center;
    gap: 6px;
}

.progress-box label {
    padding-top: 2px;
}

progress {
    appearance: none;
    width: 81px;
    height: 23px;
    border: 1px solid #bcbcbc;
    background-color: #e6e6e6;
}

progress::-webkit-progress-bar {
    background-color: #e6e6e6;
}

progress::-webkit-progress-value {
    background-color: #06b025;
}

.time-edit {
    position: absolute;
    left: 430px;
    top: 30px;
    display: flex;
    width: 118px;
    height: 22px;
    padding: 1px;
    border: 1px solid #7a7a7a;
    background-color: #fff;
}

.time-edit input {
    flex: 1;
    min-width: 0;
    padding: 2px 1px 0;
    border: none;
    background: none;
    font: inherit;
}

.spin {
    width: 14px;
    display: flex;
    flex-direction: column;
}

.spin button {
    flex: 1;
    border: 1px solid #acacac;
    background-color: #f0f0f0;
}

.spin svg {
    width: 8px;
    height: 4px;
}

.lcd {
    position: absolute;
    left: 111px;
    top: 191px;
    width: 160px;
    height: 110px;
    display: flex;
    align-items: center;
    justify-content: flex-end;
    padding-right: 7px;
    border: 1px solid #a0a0a0;
    box-shadow: inset -1px -1px #fff, -1px -1px #fff;
}

.lcd svg {
    width: 25px;
    height: 52px;
}

.push-button {
    position: absolute;
    left: 451px;
    top: 311px;
    width: 91px;
    height: 26px;
    padding-top: 2px;
    border: 1px solid #adadad;
    background-color: #e1e1e1;
}

.slider {
    position: absolute;
    left: 69px;
    top: 399px;
    width: 161px;
    height: 22px;
    margin: 0;
    appearance: none;
    background: none;
}

.slider::-webkit-slider-runnable-track {
    height: 4px;
    border: 1px solid #d6d6d6;
    background-color: #e7eaea;
}

.slider::-webkit-slider-thumb {
    appearance: none;
    width: 12px;
    height: 21px;
    margin-top: -9px;
    background-color: #0078d7;
}

/* Right docks */
.right-docks {
    width: 512px;
    display: grid;
    grid-template-rows: 250fr 339fr 358fr;
    gap: 6px;
    padding-top: 1px;
}

.right-docks .scroll-view {
    margin-top: 2px;
}

.table-wrap {
    flex: 1;
    overflow: hidden;
    padding-right: 1px;
}

table {
    width: 100%;
    table-layout: fixed;
    border-collapse: collapse;
}

th {
    height: 29px;
    padding: 0 5px;
    font-weight: normal;
    text-align: left;
    border-right: 1px solid #e5e5e5;
}

td {
    padding: 0;
    white-space: nowrap;
}

.objects th:first-child {
    width: 94px;
}

.objects tbody tr {
    height: 22px;
}

.objects tbody tr:nth-child(even) {
    background-color: #f5f5f5;
}

.objects tbody .root {
    height: 24px;
    background-color: #d9d9d9;
}

.objects td:first-child {
    padding-left: 53px;
}

.objects td:last-child {
    padding-left: 4px;
}

.objects .root td:first-child {
    padding-left: 0;
}

.root-cell {
    display: flex;
}

.root-cell span {
    width: 25px;
    height: 24px;
    padding: 6px 5px;
    background-color: #fff;
}

.root-cell div {
    display: flex;
    align-items: center;
    gap: 6px;
    padding-left: 2px;
}

.form-icon {
    width: 20px;
    height: 20px;
}

.property-tools {
    display: flex;
    align-items: center;
    height: 42px;
    padding: 0 9px 0 2px;
}

.property-tools .filter {
    flex: 1;
}

.property-tools button {
    position: relative;
    width: 24px;
    height: 24px;
    margin-left: 6px;
}

.property-tools button + button {
    margin-left: 13px;
}

.property-tools svg,
.resource-tools svg {
    width: 22px;
    height: 22px;
}

.drop::after {
    content: "";
    position: absolute;
    right: -4px;
    bottom: -2px;
    border: 4px solid transparent;
    border-top-color: #000;
    border-bottom: none;
}

.object-label {
    height: 19px;
    padding-left: 1px;
    border: 1px solid #bcbcbc;
    font: 13px/20px "Liberation Mono", monospace;
}

.properties th:first-child {
    width: 149px;
}

.properties th {
    height: 28px;
}

.properties tbody tr {
    height: 24px;
    background-color: #ffffdc;
    border-bottom: 1px solid #d4d4d4;
}

.properties td {
    position: relative;
    padding-left: 3px;
}

.properties td:first-child {
    padding-left: 28px;
    border-right: 1px solid #d4d4d4;
}

.properties td svg {
    position: absolute;
    left: 5px;
    top: 6px;
    color: #999;
}

.properties .deep {
    background-color: #ffffbf;
}

.properties .peach {
    background-color: #fff0df;
}

.properties .changed td:first-child {
    font-family: "Open Sans", sans-serif;
    font-weight: bold;
}

.properties .group {
    background-color: #a0a0a0;
    color: #fff;
    font-family: "Open Sans", sans-serif;
    font-weight: bold;
}

.properties .group td {
    padding-left: 23px;
}

.properties .group svg {
    left: 2px;
    top: 5px;
    color: #333;
}

.properties input {
    appearance: none;
    display: block;
    width: 16px;
    height: 16px;
    margin: 0;
    border: 1px solid #333;
    background-color: #fff;
}

.properties input:checked::before {
    content: "";
    display: block;
    width: 10px;
    height: 5px;
    margin: 3px 2px;
    border: solid #333;
    border-width: 0 0 1px 1px;
    transform: rotate(-45deg);
}

.resource-tools {
    display: flex;
    align-items: center;
    height: 34px;
    gap: 7px;
    padding: 0 2px 0 5px;
}

.resource-tools .filter {
    width: 225px;
    margin: 0 0 0 auto;
}

.resource-panes {
    flex: 1;
    display: grid;
    grid-template-columns: 1fr 1fr;
    gap: 6px;
}

.pane {
    padding: 1px 29px;
    border: 1px solid #828790;
    background-color: #fff;
}

.tabs {
    display: flex;
    align-items: flex-start;
    height: 23px;
    padding-left: 2px;
    font: 13px "Liberation Mono", monospace;
}

.tabs button {
    height: 21px;
    padding: 2px 15px 0;
    border: 1px solid #d9d9d9;
    border-top: none;
}

.tabs .hover {
    background-color: #d8eaf9;
}

.tabs .selected {
    height: 23px;
    background-color: #fff;
}

/* Taskbar */
.taskbar {
    width: 78px;
    display: flex;
    flex-direction: column;
    color: #fff;
    background: linear-gradient(#40403e, #434341 10%, #3d4243 20%, #424240 30%, #3b4042 52%, #32393b 78%, #454545 84%, #444);
}

.taskbar button {
    width: 100%;
}

.start {
    height: 50px;
}

.start svg {
    width: 22px;
    height: 22px;
}

.search {
    height: 50px;
}

.search svg,
.tasks svg {
    width: 30px;
    height: 30px;
}

.taskbar hr {
    width: 54px;
    height: 4px;
    margin: 6px 12px 23px;
    border: solid #777;
    border-width: 1px 0;
}

.tasks button {
    position: relative;
    height: 59px;
}

.tasks .small {
    width: 26px;
    height: 22px;
}

.tasks .open::after {
    content: "";
    position: absolute;
    right: 0;
    top: 5px;
    width: 3px;
    height: 48px;
    background-color: #76b9ed;
}

.tasks .multi::after {
    width: 5px;
    background-color: #6494be;
    border-right: 1px solid #76b9ed;
}

.tasks .current {
    background-color: #686866;
}

.tasks .current::after {
    top: 0;
    height: 59px;
}

.tray {
    flex: 1;
    display: flex;
    flex-direction: column;
    justify-content: flex-end;
}

.battery {
    display: flex;
    align-items: center;
    gap: 2px;
    height: 22px;
    margin-left: 11px;
}

.battery svg {
    width: 12px;
    height: 22px;
}

.battery span {
    position: relative;
    width: 41px;
    height: 22px;
    border: 2px solid #fff;
    outline: 1px solid #333;
    background-color: #169c46;
    box-shadow: inset 0 0 0 1px #222;
    font-size: 12px;
    line-height: 18px;
    text-align: center;
}

.battery span::after {
    content: "";
    position: absolute;
    right: -5px;
    top: 4px;
    width: 3px;
    height: 10px;
    background-color: #fff;
}

.more {
    height: 37px;
}

.taskbar .more {
    justify-content: flex-start;
    padding-left: 16px;
}

.more svg {
    width: 10px;
    height: 16px;
}

.ime {
    display: flex;
    align-items: center;
    justify-content: space-between;
    height: 36px;
    padding: 0 16px 0 7px;
    font: 18px "Noto Sans CJK SC", sans-serif;
}

.ime svg {
    width: 20px;
    height: 20px;
}

.tray time {
    height: 104px;
    line-height: 104px;
    text-align: center;
    font-family: "Open Sans", sans-serif;
}

.taskbar .note {
    height: 51px;
    justify-content: flex-start;
    align-items: flex-start;
    padding: 5px 0 0 28px;
}

.note svg {
    width: 32px;
    height: 30px;
}

.watermark {
    position: absolute;
    right: 16px;
    bottom: 9px;
    font-family: "Liberation Sans", sans-serif;
    font-size: 14px;
    line-height: 18px;
    color: #d0d0d0;
    text-shadow: 0 0 1px #555, 1px 1px 1px #777;
}
```
